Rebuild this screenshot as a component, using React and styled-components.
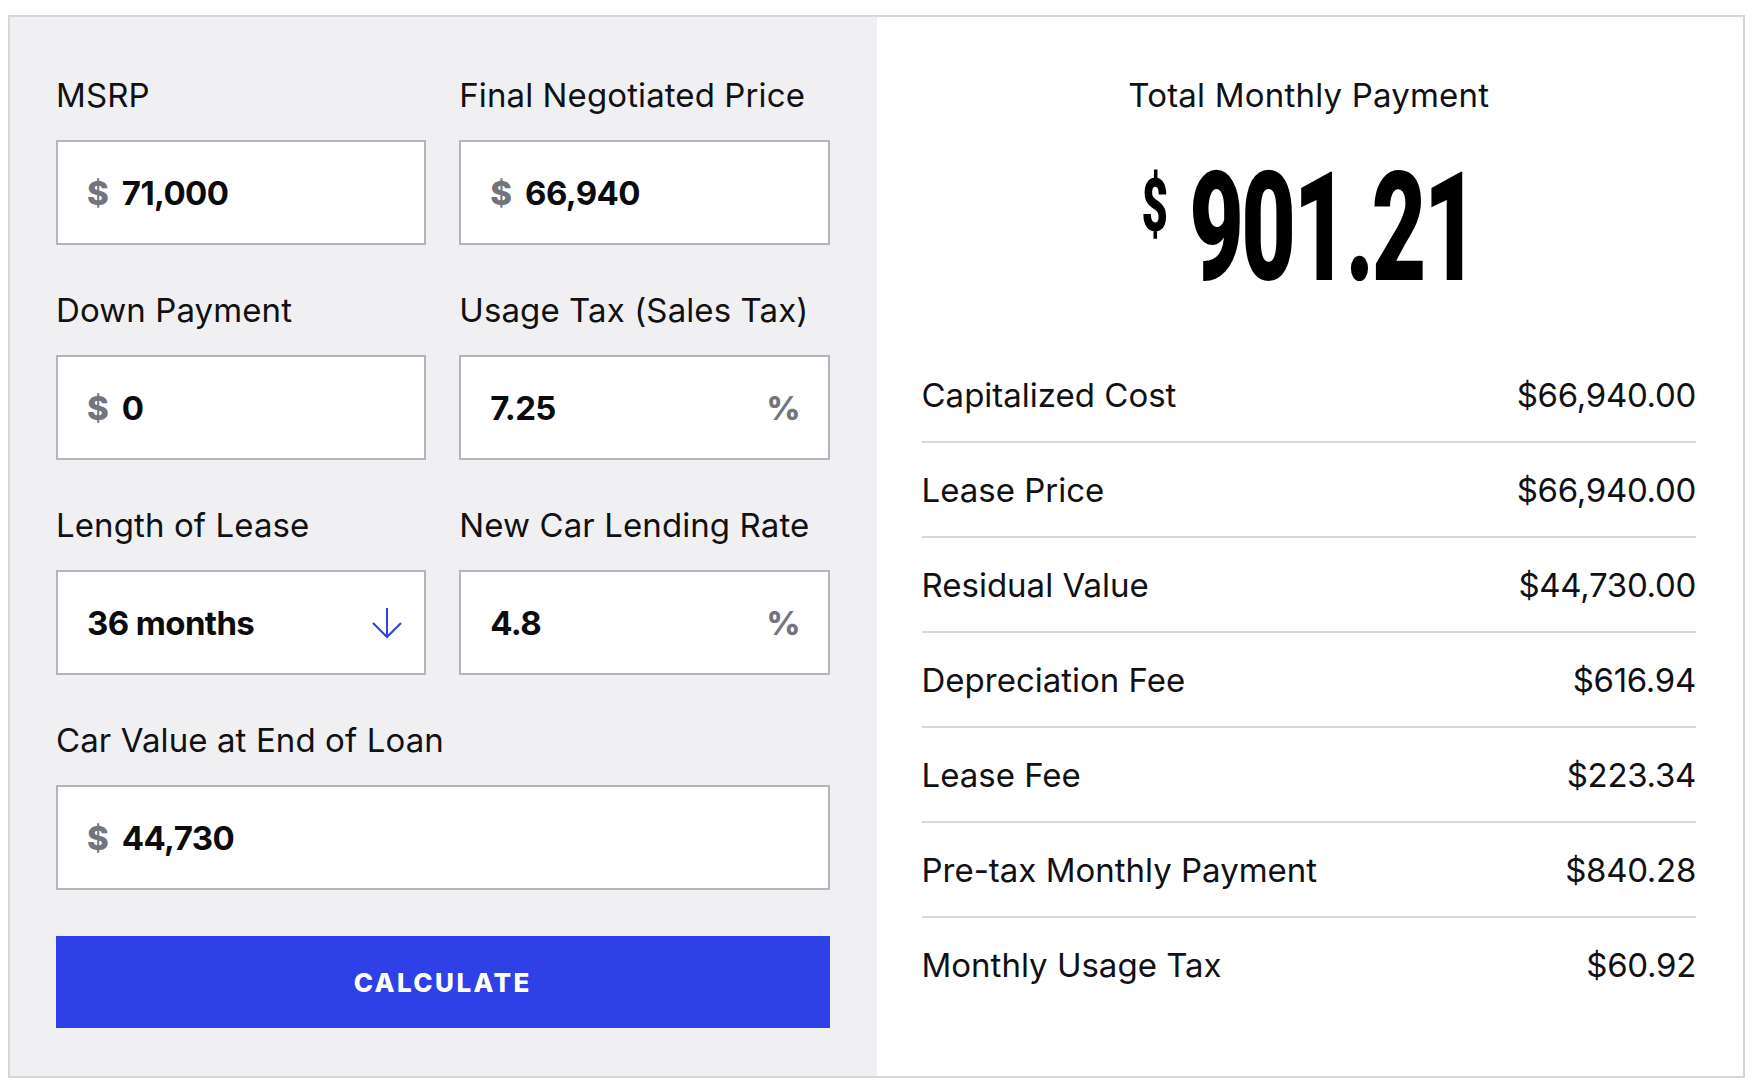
import React from 'react';
import styled, {createGlobalStyle} from 'styled-components';

const GlobalStyle = createGlobalStyle`
  * {
    box-sizing: border-box;
  }
  body {
    margin: 0;
    background: #ffffff;
    font-family: Inter, 'Noto Sans', sans-serif;
    color: #111114;
  }
`;

const Calculator = styled.div`
  display: grid;
  grid-template-columns: 1fr 1fr;
  margin: 15px 13px 12px 8px;
  border: 2px solid #d7d7da;
`;

const InputsPanel = styled.div`
  background-color: #f0f0f2;
  padding: 58px 47px 48px 46px;
`;

const FieldGrid = styled.div`
  display: grid;
  grid-template-columns: 1fr 1fr;
  column-gap: 33px;
  row-gap: 45px;
`;

const Field = styled.div`
  display: flex;
  flex-direction: column;
  grid-column: ${({wide}) => (wide ? '1 / -1' : 'auto')};
`;

const Label = styled.label`
  font-size: 33px;
  line-height: 40px;
  letter-spacing: 0.1px;
  margin-bottom: 25px;
  color: #111114;
`;

const InputBox = styled.div`
  display: flex;
  align-items: center;
  height: 105px;
  padding: 0 27px 0 29px;
  background-color: #ffffff;
  border: 2px solid #b4b4ba;
`;

const Affix = styled.span`
  font-size: 33px;
  font-weight: 800;
  color: #74747c;
  margin: ${({after}) => (after ? '0 0 0 auto' : '0 13px 0 0')};
`;

const Value = styled.span`
  font-size: 33px;
  font-weight: 700;
  letter-spacing: -0.6px;
  color: #0c0c0e;
`;

const ArrowIcon = styled.svg`
  margin-left: auto;
  margin-right: -6px;
  width: 32px;
  height: 32px;
`;

const CalculateButton = styled.button`
  display: block;
  width: 100%;
  height: 92px;
  margin-top: 46px;
  border: none;
  background-color: #2e40e6;
  color: #ffffff;
  font-family: Inter, sans-serif;
  font-size: 26px;
  font-weight: 800;
  letter-spacing: 2.4px;
  cursor: pointer;
`;

const ResultsPanel = styled.div`
  background-color: #ffffff;
  padding: 58px 47px 48px 45px;
`;

const ResultTitle = styled.div`
  text-align: center;
  font-size: 33px;
  line-height: 40px;
  letter-spacing: 0.2px;
`;

const BigAmountRow = styled.div`
  text-align: center;
  margin: 37px 0 44px;
  line-height: 1;
`;

const BigAmount = styled.div`
  display: inline-block;
  font-family: Roboto, 'Liberation Sans', sans-serif;
  font-weight: 900;
  font-size: 152px;
  line-height: 1;
  letter-spacing: -4px;
  color: #000000;
  transform: scaleX(0.62);
`;

const Currency = styled.span`
  display: inline-block;
  vertical-align: top;
  font-size: 74px;
  line-height: 1;
  letter-spacing: 0;
  margin: 17px 34px 0 0;
`;

const Breakdown = styled.div`
  display: flex;
  flex-direction: column;
`;

const Row = styled.div`
  display: flex;
  justify-content: space-between;
  align-items: center;
  padding: 27px 0 26px;
  font-size: 33px;
  line-height: 40px;
  border-bottom: 2px solid #d8d8db;
  &:last-child {
    border-bottom: none;
  }
`;

const RowValue = styled.span`
  letter-spacing: -0.3px;
`;

const breakdown = [
  {label: 'Capitalized Cost', value: '$66,940.00'},
  {label: 'Lease Price', value: '$66,940.00'},
  {label: 'Residual Value', value: '$44,730.00'},
  {label: 'Depreciation Fee', value: '$616.94'},
  {label: 'Lease Fee', value: '$223.34'},
  {label: 'Pre-tax Monthly Payment', value: '$840.28'},
  {label: 'Monthly Usage Tax', value: '$60.92'},
];

const DownArrow = () => (
  <ArrowIcon viewBox="0 0 32 32" fill="none" stroke="#2e40e6" strokeWidth="2">
    <path d="M16 1v29" />
    <path d="M2 16l14 14 14-14" />
  </ArrowIcon>
);

const App = () => (
  <>
    <GlobalStyle />
    <Calculator>
      <InputsPanel>
        <FieldGrid>
          <Field>
            <Label>MSRP</Label>
            <InputBox>
              <Affix>$</Affix>
              <Value>71,000</Value>
            </InputBox>
          </Field>
          <Field>
            <Label>Final Negotiated Price</Label>
            <InputBox>
              <Affix>$</Affix>
              <Value>66,940</Value>
            </InputBox>
          </Field>
          <Field>
            <Label>Down Payment</Label>
            <InputBox>
              <Affix>$</Affix>
              <Value>0</Value>
            </InputBox>
          </Field>
          <Field>
            <Label>Usage Tax (Sales Tax)</Label>
            <InputBox>
              <Value>7.25</Value>
              <Affix after>%</Affix>
            </InputBox>
          </Field>
          <Field>
            <Label>Length of Lease</Label>
            <InputBox>
              <Value>36 months</Value>
              <DownArrow />
            </InputBox>
          </Field>
          <Field>
            <Label>New Car Lending Rate</Label>
            <InputBox>
              <Value>4.8</Value>
              <Affix after>%</Affix>
            </InputBox>
          </Field>
          <Field wide>
            <Label>Car Value at End of Loan</Label>
            <InputBox>
              <Affix>$</Affix>
              <Value>44,730</Value>
            </InputBox>
          </Field>
        </FieldGrid>
        <CalculateButton>CALCULATE</CalculateButton>
      </InputsPanel>

      <ResultsPanel>
        <ResultTitle>Total Monthly Payment</ResultTitle>
        <BigAmountRow>
          <BigAmount>
            <Currency>$</Currency>
            901.21
          </BigAmount>
        </BigAmountRow>
        <Breakdown>
          {breakdown.map(item => (
            <Row key={item.label}>
              <span>{item.label}</span>
              <RowValue>{item.value}</RowValue>
            </Row>
          ))}
        </Breakdown>
      </ResultsPanel>
    </Calculator>
  </>
);

export default App;
